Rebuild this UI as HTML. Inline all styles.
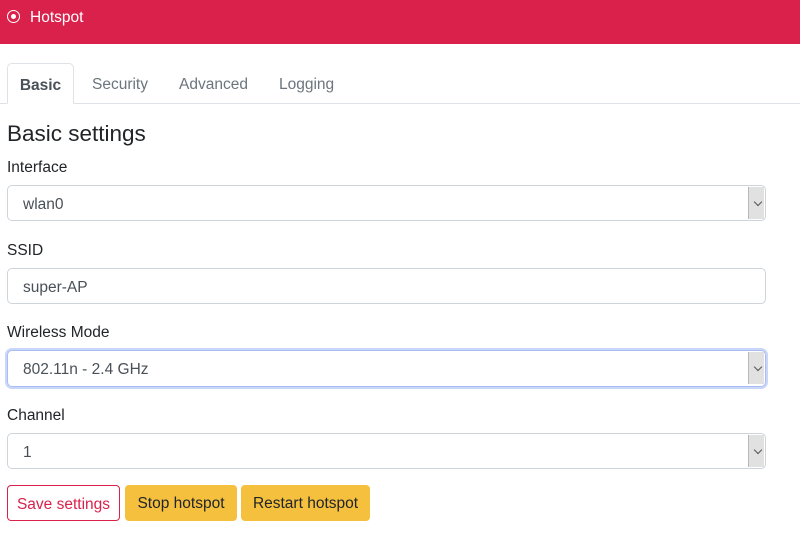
<!DOCTYPE html>
<html><head><style>
body{margin:0;width:800px;height:537px;overflow:hidden;background:#fff;font-family:"Liberation Sans",sans-serif;color:#212529;}
.hdr{position:absolute;left:0;top:0;width:800px;height:44px;background:#d9214b;color:#fff;font-size:15.5px;}
.hdr .ic{position:absolute;left:7px;top:10px;width:11px;height:11px;border:1.6px solid #fff;border-radius:50%;}
.hdr .ic:after{content:"";position:absolute;left:3px;top:3px;width:5px;height:5px;background:#fff;border-radius:50%;}
.hdr span{position:absolute;left:30px;top:9px;}
.tabline{position:absolute;left:0;top:103px;width:800px;height:1px;background:#dee2e6;}
.tab{position:absolute;top:76px;font-size:15.5px;color:#6c757d;}
.tab.act{left:7px;top:63px;width:67px;border:1px solid #dee2e6;border-bottom:1px solid #fff;border-radius:5px 5px 0 0;background:#fff;color:#495057;font-weight:bold;text-align:center;line-height:44px;box-sizing:border-box;height:41px;}
h1{position:absolute;left:7px;top:121px;margin:0;font-size:22.5px;font-weight:normal;}
.lbl{position:absolute;left:7px;font-size:15.5px;}
.fld{position:absolute;left:7px;width:759px;height:36px;border:1px solid #ced4da;border-radius:5px;box-sizing:border-box;font-size:15.5px;color:#495057;padding-left:15px;line-height:38px;}
.fld.sel:after{content:"";position:absolute;right:1px;top:1px;width:15px;height:32px;background:#e1e1e1;border-left:1px solid #b8b8b8;}
.fld.sel .ar{position:absolute;right:4px;top:13px;width:5px;height:5px;border-right:1.3px solid #555;border-bottom:1.3px solid #555;transform:rotate(45deg);z-index:2;}
.focus{border-color:#a9bdf5;box-shadow:0 0 0 2px #c9d6fa;}
.btn{position:absolute;top:485px;height:36px;border-radius:4px;box-sizing:border-box;font-size:15.5px;line-height:38px;text-align:center;}
</style></head><body>
<div class="hdr"><div class="ic"></div><span>Hotspot</span></div>
<div class="tabline"></div>
<div class="tab act">Basic</div>
<div class="tab" style="left:92px">Security</div>
<div class="tab" style="left:179px">Advanced</div>
<div class="tab" style="left:279px">Logging</div>
<h1>Basic settings</h1>
<div class="lbl" style="top:159px">Interface</div>
<div class="fld sel" style="top:185px">wlan0<div class="ar"></div></div>
<div class="lbl" style="top:242px">SSID</div>
<div class="fld" style="top:268px">super-AP</div>
<div class="lbl" style="top:324px">Wireless Mode</div>
<div class="fld sel focus" style="top:350px;height:37px">802.11n - 2.4 GHz<div class="ar"></div></div>
<div class="lbl" style="top:407px">Channel</div>
<div class="fld sel" style="top:433px">1<div class="ar"></div></div>
<div class="btn" style="left:7px;width:113px;border:1px solid #d9214b;color:#d9214b;">Save settings</div>
<div class="btn" style="left:125px;width:112px;background:#f5c03d;color:#212529;">Stop hotspot</div>
<div class="btn" style="left:241px;width:129px;background:#f5c03d;color:#212529;">Restart hotspot</div>
</body></html>
